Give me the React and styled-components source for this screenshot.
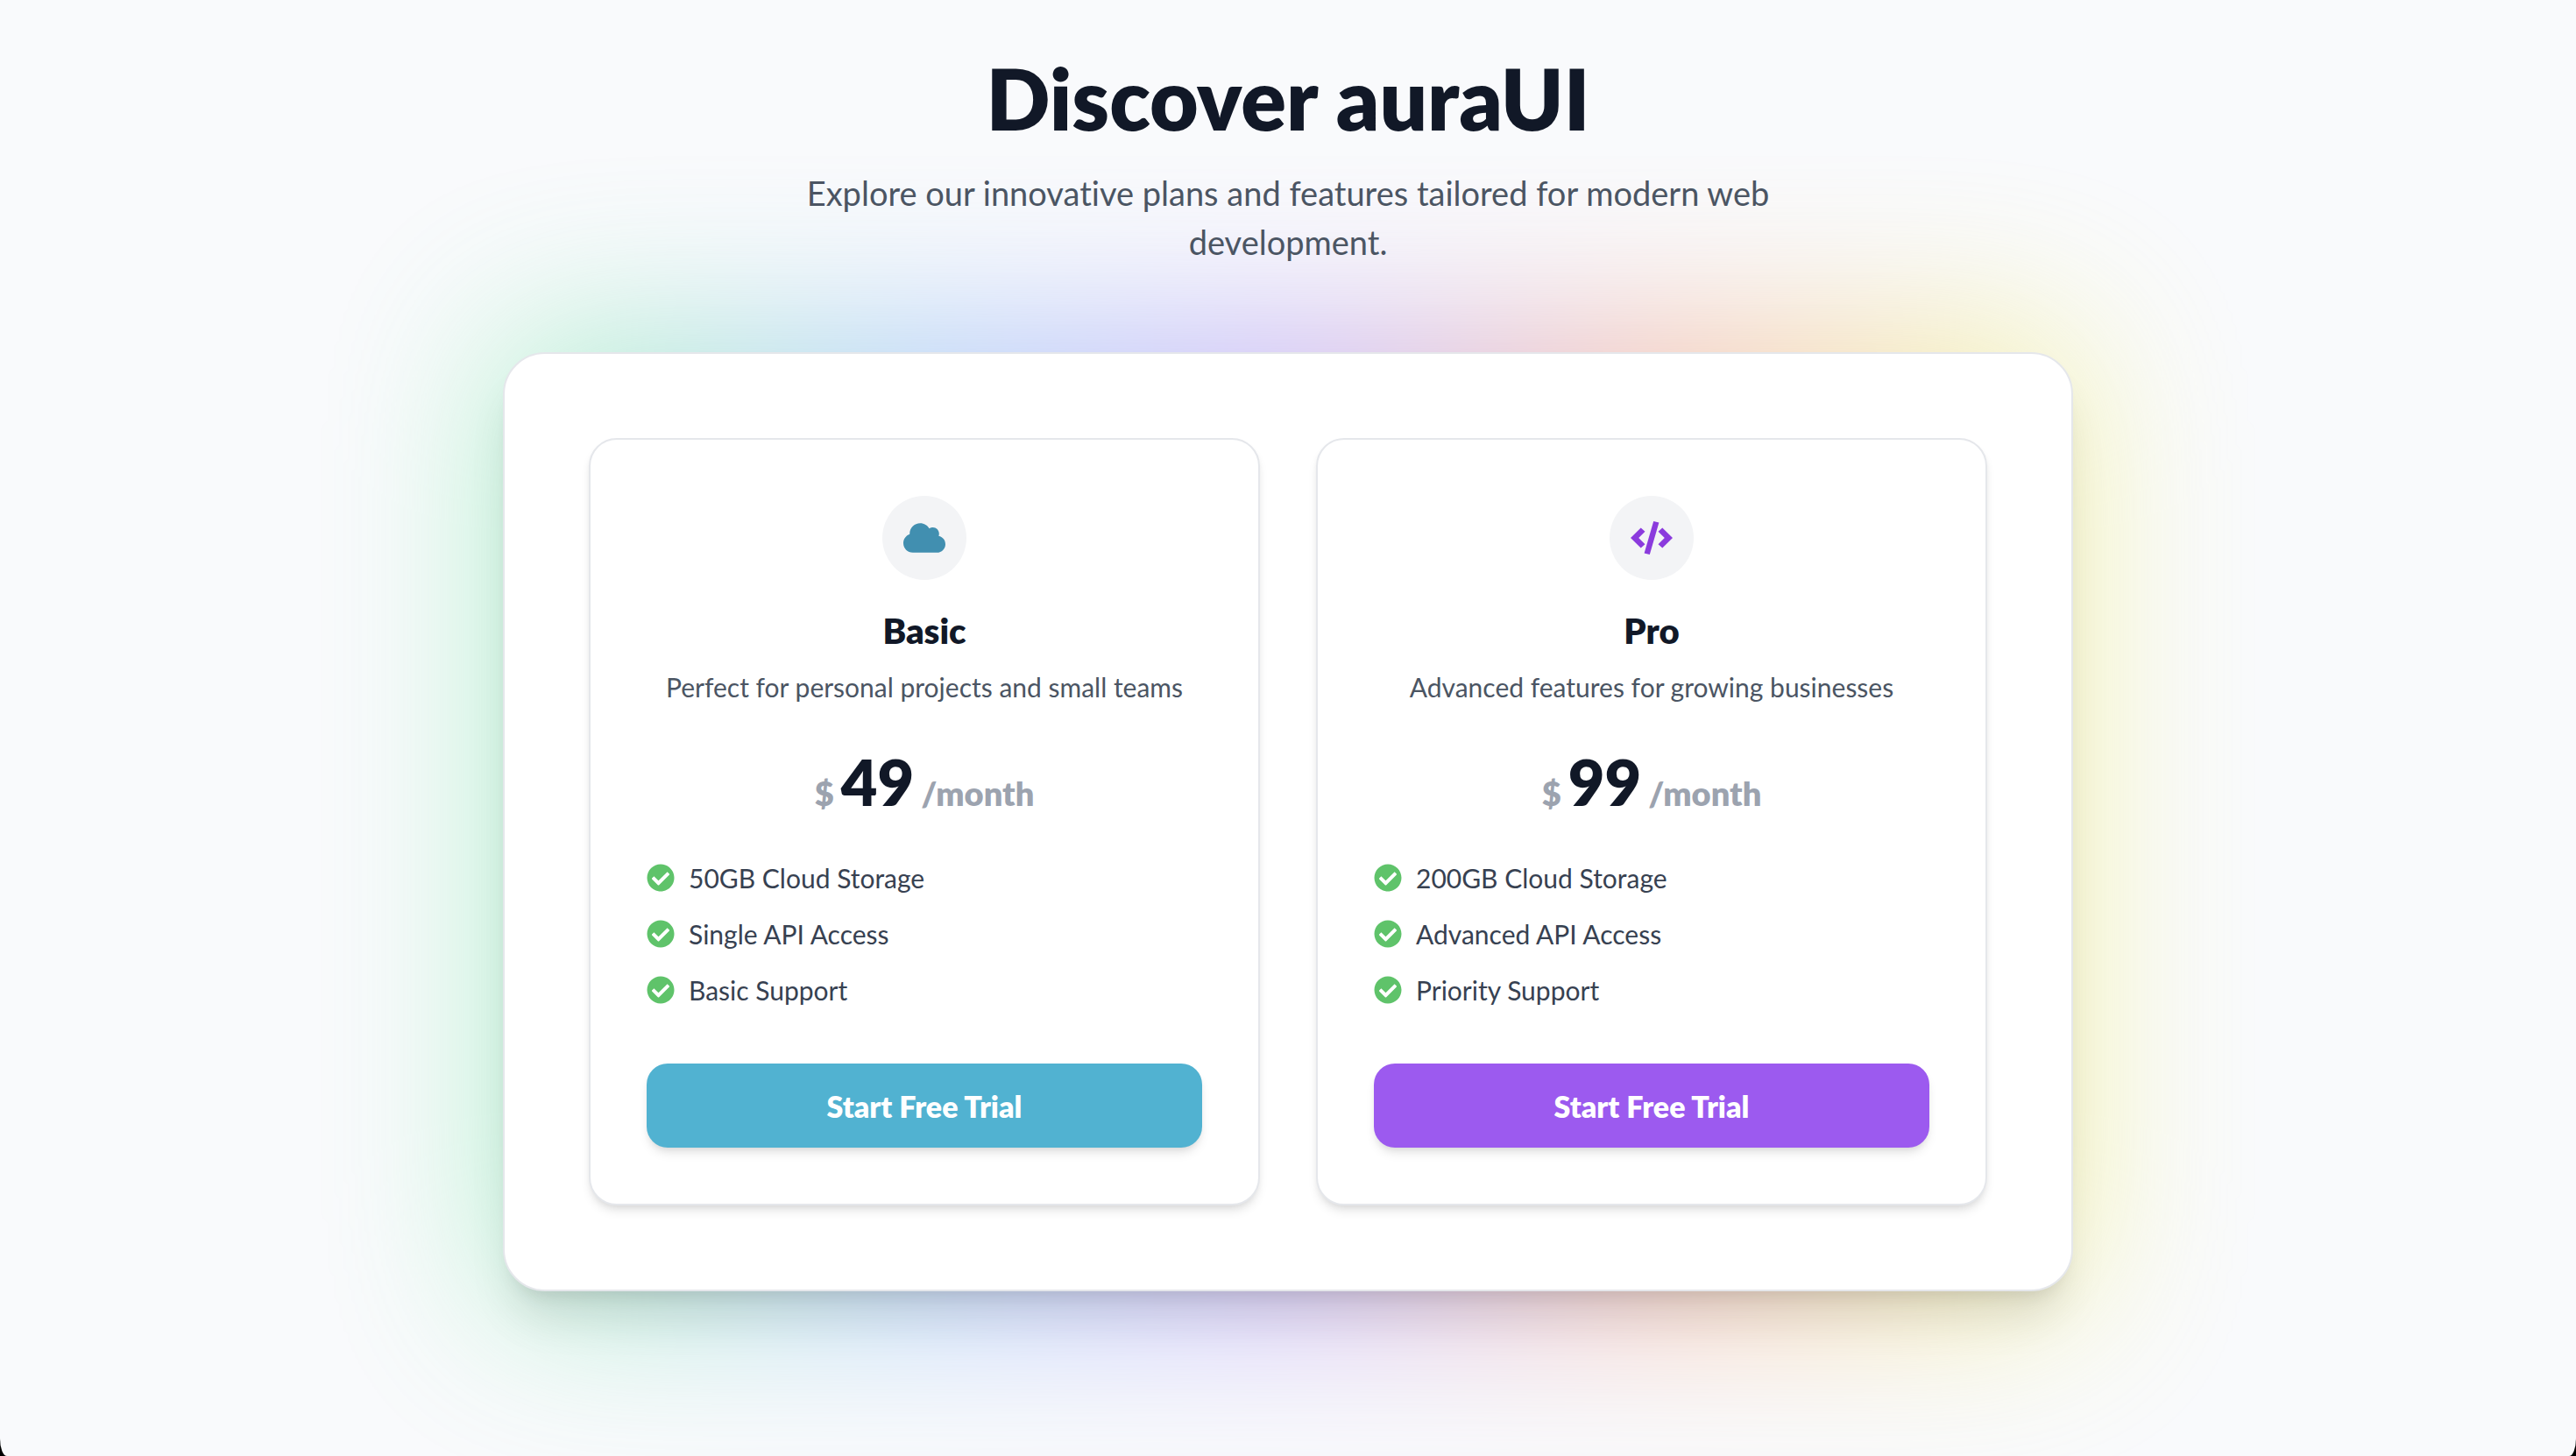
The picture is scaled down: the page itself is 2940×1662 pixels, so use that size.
import React from "react";
import styled, { createGlobalStyle } from "styled-components";
import { FaCheckCircle, FaCloud } from "react-icons/fa";

const GlobalStyle = createGlobalStyle`
  *, *::before, *::after { box-sizing: border-box; }
  html { background: #000; }
  body { margin: 0; }
  h1, h2, p, ul { margin: 0; padding: 0; }
`;

const Page = styled.main`
  min-height: 100vh;
  overflow: hidden;
  padding: 64px;
  border-radius: 0 0 8px 8px / 0 0 20px 20px;
  background: #f9fafc;
  color: #111827;
  font-family: Lato, "Liberation Sans", sans-serif;
  font-variant-ligatures: none;
`;

const Header = styled.header`
  position: relative;
  z-index: 1;
  display: flex;
  flex-direction: column;
  align-items: center;
  gap: 32px;
  margin-bottom: 98px;
  text-align: center;
`;

const Title = styled.h1`
  font-size: 96px;
  line-height: 96px;
  font-weight: 800;
`;

const Subtitle = styled.p`
  max-width: 1200px;
  color: #4b5563;
  font-size: 38px;
  line-height: 56px;
`;

const Showcase = styled.section`
  position: relative;
  max-width: 1792px;
  margin: 0 auto;
`;

const Glow = styled.div`
  position: absolute;
  inset: -24px -8px;
  border-radius: 48px;
  background: linear-gradient(90deg, #62e694 4%, #5c9ff5, #9068f2, #f07c5c, #eeee52 96%);
  opacity: 0.45;
  filter: blur(96px);
`;

const Panel = styled.div`
  position: relative;
  display: grid;
  grid-template-columns: repeat(auto-fit, minmax(600px, 1fr));
  gap: 64px;
  padding: 96px;
  border: 2px solid #e5e7eb;
  border-radius: 48px;
  background: #fff;
  box-shadow: 0 40px 50px -10px rgba(0, 0, 0, 0.1), 0 16px 20px -12px rgba(0, 0, 0, 0.1);
`;

const Card = styled.article`
  display: flex;
  flex-direction: column;
  align-items: center;
  padding: 64px;
  border: 2px solid #e5e7eb;
  border-radius: 32px;
  background: #fff;
  box-shadow: 0 8px 12px -2px rgba(0, 0, 0, 0.1), 0 4px 8px -4px rgba(0, 0, 0, 0.1);
`;

const IconBadge = styled.div`
  display: flex;
  align-items: center;
  justify-content: center;
  width: 96px;
  height: 96px;
  margin-bottom: 32px;
  border-radius: 50%;
  background: #f3f4f6;
  color: ${(p) => p.$color};

  svg { width: 48px; height: 48px; }
`;

const PlanName = styled.h2`
  margin-bottom: 16px;
  font-size: 40px;
  line-height: 52px;
  font-weight: 800;
`;

const PlanNote = styled.p`
  margin-bottom: 48px;
  color: #4b5563;
  font-size: 30px;
  line-height: 44px;
`;

const Price = styled.p`
  display: flex;
  align-items: baseline;
  gap: 8px;
  margin-bottom: 52px;
  font-weight: 800;
`;

const Amount = styled.span`
  font-size: 72px;
  line-height: 76px;
`;

const Unit = styled.span`
  color: #9ca3af;
  font-size: 38px;
  line-height: 40px;
`;

const Features = styled.ul`
  display: flex;
  flex-direction: column;
  align-self: stretch;
  gap: 24px;
  margin-bottom: 64px;
  list-style: none;
`;

const Feature = styled.li`
  display: flex;
  align-items: center;
  gap: 16px;
  color: #374151;
  font-size: 30px;
  line-height: 40px;

  svg { width: 32px; height: 32px; color: #5fc36a; }
`;

const TrialButton = styled.button`
  align-self: stretch;
  height: 96px;
  border: 0;
  border-radius: 24px;
  background: ${(p) => p.$color};
  box-shadow: 0 8px 12px -2px rgba(0, 0, 0, 0.1), 0 4px 8px -4px rgba(0, 0, 0, 0.1);
  color: #fff;
  font-family: inherit;
  font-size: 34px;
  font-weight: 800;
  cursor: pointer;
`;

function CodeIcon(props) {
  return (
    <svg viewBox="0 0 48 48" fill="currentColor" {...props}>
      <path d="M0 24 11.7 12.5l4.8 4.2L9.2 24l7.3 7.3-4.8 4.2z" />
      <path d="M48 24 36.3 12.5l-4.8 4.2 7.3 7.3-7.3 7.3 4.8 4.2z" />
      <path d="M26.2 5l6.2 1.6L21.8 43l-6.2-1.6z" />
    </svg>
  );
}

const plans = [
  {
    name: "Basic",
    note: "Perfect for personal projects and small teams",
    price: "49",
    Icon: FaCloud,
    iconColor: "#418fb0",
    buttonColor: "#51b2d1",
    features: ["50GB Cloud Storage", "Single API Access", "Basic Support"],
  },
  {
    name: "Pro",
    note: "Advanced features for growing businesses",
    price: "99",
    Icon: CodeIcon,
    iconColor: "#8b3bdd",
    buttonColor: "#9c5aef",
    features: ["200GB Cloud Storage", "Advanced API Access", "Priority Support"],
  },
];

function PlanCard({ plan }) {
  const { Icon } = plan;
  return (
    <Card>
      <IconBadge $color={plan.iconColor}>
        <Icon aria-hidden="true" />
      </IconBadge>
      <PlanName>{plan.name}</PlanName>
      <PlanNote>{plan.note}</PlanNote>
      <Price>
        <Unit>$</Unit>
        <Amount>{plan.price}</Amount>
        <Unit>/month</Unit>
      </Price>
      <Features>
        {plan.features.map((feature) => (
          <Feature key={feature}>
            <FaCheckCircle aria-hidden="true" />
            {feature}
          </Feature>
        ))}
      </Features>
      <TrialButton type="button" $color={plan.buttonColor}>
        Start Free Trial
      </TrialButton>
    </Card>
  );
}

export default function App() {
  return (
    <>
      <GlobalStyle />
      <Page>
        <Header>
          <Title>Discover auraUI</Title>
          <Subtitle>
            Explore our innovative plans and features tailored for modern web development.
          </Subtitle>
        </Header>
        <Showcase>
          <Glow />
          <Panel>
            {plans.map((plan) => (
              <PlanCard key={plan.name} plan={plan} />
            ))}
          </Panel>
        </Showcase>
      </Page>
    </>
  );
}
